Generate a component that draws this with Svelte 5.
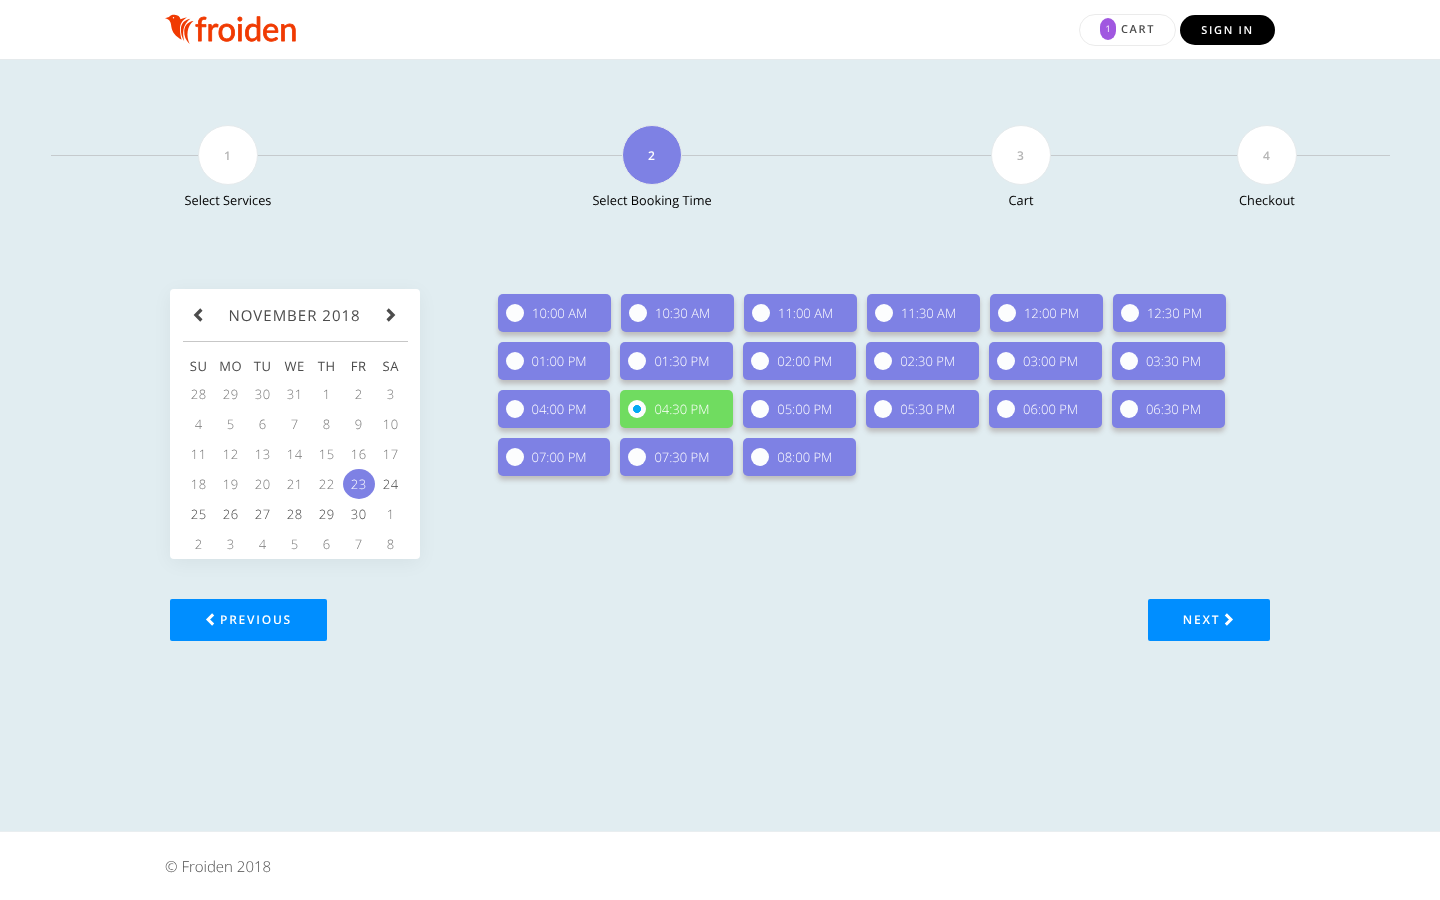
<script>
  const steps = ['Select Services', 'Select Booking Time', 'Cart', 'Checkout'];
  const weekdays = ['SU', 'MO', 'TU', 'WE', 'TH', 'FR', 'SA'];
  const days = Array.from({ length: 42 }, (_, i) => {
    const n = i - 3;
    const number = n < 1 ? n + 31 : n > 30 ? n - 30 : n;
    return { number, today: n === 23, open: n > 23 && n <= 30 };
  });
  const rows = [
    ['10:00 AM', '10:30 AM', '11:00 AM', '11:30 AM', '12:00 PM', '12:30 PM'],
    ['01:00 PM', '01:30 PM', '02:00 PM', '02:30 PM', '03:00 PM', '03:30 PM'],
    ['04:00 PM', '04:30 PM', '05:00 PM', '05:30 PM', '06:00 PM', '06:30 PM'],
    ['07:00 PM', '07:30 PM', '08:00 PM']
  ];
  let selected = $state('04:30 PM');
</script>

{#snippet chevron(right)}
  <svg class="chevron" class:right viewBox="0 0 10 14" aria-hidden="true">
    <path d="M8.400 1.500 2.900 7l5.500 5.500" fill="none" stroke="currentColor" stroke-width="3.200" />
  </svg>
{/snippet}

<header>
  <div class="container bar">
    <svg class="logo" width="132" height="32" viewBox="0 0 132 32" role="img" aria-label="froiden">
      <g fill="#f03a02">
        <path d="M0 4.300 4 3C5.200 1.300 7.500.7 9.500.8c3.400.1 5.500 2 6 4.500C17.200 4.500 19.400 3.500 22 3.400c-4.700 2.800-7.200 6.600-7 11.800.1 3.900.6 6.900 1.600 10.500C10.800 22.500 7 18.300 6.300 12.500 5.900 8.700 5.300 5.500 0 4.300z" />
        <path d="M25.300 4.800c-5.600.9-9.100 4.700-9.400 10-.2 4.600.9 8.600 3.300 12.400-.9-4-1.500-8-.7-11.900.9-4.300 3.200-7.800 6.800-10.500z" />
        <path d="M28.500 6.900c-5.200.6-9 4.300-9.300 9.900-.2 5.200 1.500 9.400 5.400 13.200-1.800-4.200-2.600-8.300-1.900-12.700.7-4.500 2.500-7.900 5.800-10.400z" />
      </g>
      <circle cx="8.500" cy="3.700" r=".7" fill="#fff" />
      <text x="30" y="27.300" textLength="102.500" lengthAdjust="spacingAndGlyphs">froiden</text>
    </svg>
    <nav>
      <button class="pill cart"><span class="count">1</span>CART</button>
      <button class="pill sign">SIGN IN</button>
    </nav>
  </div>
</header>

<main>
  <ol class="steps">
    {#each steps as step, i}
      <li class:active={i === 1}><span class="dot">{i + 1}</span><span>{step}</span></li>
    {/each}
  </ol>

  <div class="booking">
    <section class="calendar">
      <div class="month">
        {@render chevron(false)}<span>NOVEMBER 2018</span>{@render chevron(true)}
      </div>
      <div class="days">
        {#each weekdays as day}<span class="weekday">{day}</span>{/each}
        {#each days as day}
          <span class="day" class:today={day.today} class:open={day.open}>{day.number}</span>
        {/each}
      </div>
    </section>

    <section class="slots">
      {#each rows as row}
        <div class="row">
          {#each row as time}
            <button class="slot" class:selected={selected === time} onclick={() => (selected = time)}>
              <span class="radio"></span>{time}
            </button>
          {/each}
        </div>
      {/each}
    </section>
  </div>

  <div class="actions">
    <button class="action">{@render chevron(false)}PREVIOUS</button>
    <button class="action next">NEXT{@render chevron(true)}</button>
  </div>
</main>

<footer><div class="container">© Froiden 2018</div></footer>

<style>
  :global(body) {
    margin: 0;
    background: #fff;
    font-family: 'Open Sans', sans-serif;
    color: #4c4c4c;
    text-rendering: geometricPrecision;
  }
  :global(#app) {
    will-change: opacity;
  }
  button {
    border: 0;
    padding: 0;
    font-family: inherit;
    text-rendering: inherit;
    cursor: pointer;
  }
  header {
    height: 59px;
  }
  .container {
    width: 1110px;
    margin: 0 auto;
  }
  .bar {
    display: flex;
    justify-content: space-between;
    padding-top: 14px;
  }
  .logo {
    display: block;
    overflow: visible;
  }
  .logo text {
    font: 400 33px 'Lato', sans-serif;
    fill: #f03a02;
    stroke: #f03a02;
    stroke-width: 0.800px;
    stroke-linejoin: round;
  }
  nav {
    display: flex;
    align-items: center;
    gap: 4px;
    height: 32px;
  }
  .pill {
    box-sizing: border-box;
    display: flex;
    align-items: center;
    justify-content: center;
    font-size: 11px;
    font-weight: 600;
    letter-spacing: 1.650px;
    border-radius: 16px;
  }
  .cart {
    width: 97px;
    height: 32px;
    border: 1px solid #ebebeb;
    background: #fff;
    color: #4c4c4c;
    padding-bottom: 1px;
  }
  .count {
    width: 16px;
    height: 22px;
    line-height: 22px;
    margin: 0 5px 1px 0;
    border-radius: 8px / 9px;
    background: #a057e0;
    color: #fff;
    font-size: 9px;
    font-weight: 400;
    letter-spacing: 0;
  }
  .sign {
    width: 95px;
    height: 30px;
    background: #000;
    color: #fff;
  }
  main {
    box-sizing: border-box;
    height: 773px;
    padding-top: 67px;
    background: #e1edf1;
    border-top: 1px solid #e5eaec;
    border-bottom: 1px solid #e9eef0;
  }
  .steps {
    list-style: none;
    margin: 0 50px;
    padding: 0;
    display: grid;
    grid-template-columns: 356px 492px 246px 246px;
    height: 162px;
    background: linear-gradient(#c5cacd, #c5cacd) 0.500px 28px / 1339px 1px no-repeat;
  }
  .steps li {
    display: flex;
    flex-direction: column;
    align-items: center;
    font-size: 12.750px;
    line-height: 18px;
    color: #000;
  }
  .dot {
    box-sizing: border-box;
    width: 60px;
    height: 60px;
    margin: -2px 0 6px;
    border: 1px solid #e5eaec;
    border-radius: 50%;
    background: #fff;
    color: #b5b5b5;
    font-size: 12px;
    line-height: 59px;
    font-weight: 600;
    text-align: center;
    padding-right: 1px;
  }
  .active .dot {
    background: #7e81e4;
    color: #fff;
  }
  .booking {
    width: 1100px;
    margin: 0 auto;
    display: flex;
    align-items: flex-start;
    gap: 78px;
  }
  .calendar {
    box-sizing: border-box;
    width: 250px;
    height: 270px;
    padding: 0 12px 0 13px;
    border-radius: 4px;
    background: #fff;
    box-shadow: 0 4px 20px rgba(0, 0, 0, 0.05);
  }
  .month {
    box-sizing: border-box;
    height: 53px;
    display: flex;
    align-items: center;
    justify-content: space-between;
    padding: 1px 12px 0 10px;
    border-bottom: 1px solid #c7c7c7;
    font-size: 15px;
    letter-spacing: 1px;
  }
  .chevron {
    width: 10px;
    height: 14px;
  }
  .month .chevron {
    margin-bottom: 1px;
  }
  .chevron.right {
    transform: scaleX(-1);
  }
  .days {
    display: grid;
    grid-template-columns: repeat(7, 32px);
    grid-template-rows: 27px repeat(6, 30px);
    padding-top: 10px;
    text-align: center;
    font-size: 13px;
    letter-spacing: 0.600px;
  }
  .weekday,
  .day {
    box-sizing: border-box;
    padding-right: 0.600px;
  }
  .weekday {
    line-height: 28px;
  }
  .day {
    line-height: 30px;
    font-weight: 300;
    color: #777;
  }
  .day.open {
    color: #444;
  }
  .day.today {
    border-radius: 50%;
    background: #7e81e4;
    color: #fff;
  }
  .slots {
    padding-top: 5px;
    display: grid;
    gap: 10px;
  }
  .row {
    display: flex;
    gap: 10px;
    margin-left: -0.500px;
  }
  .row:first-child {
    margin-left: 0;
    gap: 10.100px;
  }
  .slot {
    box-sizing: border-box;
    width: 112.900px;
    height: 38px;
    display: flex;
    align-items: center;
    gap: 8px;
    padding-left: 8px;
    border-radius: 5px;
    background: #7e81e4;
    box-shadow: 0 4px 5px #bdbdbd;
    color: #fff;
    font-size: 13px;
    font-weight: 300;
  }
  .slot.selected {
    background: #70dc60;
  }
  .radio {
    width: 18px;
    height: 18px;
    border-radius: 50%;
    background: #fcfdfe;
  }
  .selected .radio {
    background: radial-gradient(circle, #03a9f4 3.700px, #fcfdfe 4.300px);
  }
  .actions {
    width: 1100px;
    margin: 40px auto 0;
    display: flex;
    justify-content: space-between;
  }
  .action {
    box-sizing: border-box;
    width: 157px;
    height: 42px;
    display: flex;
    align-items: center;
    justify-content: center;
    gap: 5px;
    padding: 0 0 1px;
    border-radius: 2px;
    background: #008eff;
    color: #fff;
    font-size: 12px;
    font-weight: 600;
    letter-spacing: 1.750px;
  }
  .action .chevron {
    width: 10px;
    height: 13px;
  }
  .action.next {
    width: 122px;
    gap: 4px;
    padding-right: 1px;
  }
  footer {
    height: 68px;
    background: #fff;
    font-size: 15px;
    font-weight: 300;
    line-height: 71px;
  }
</style>
